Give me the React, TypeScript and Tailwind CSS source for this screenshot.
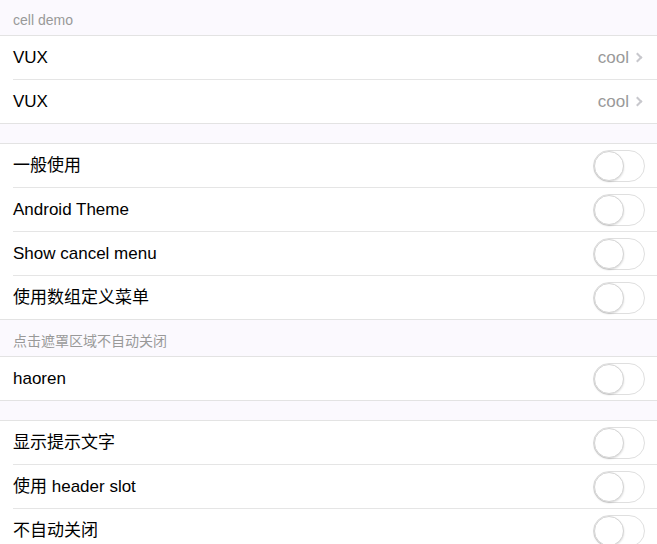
import React from "react";

const font = { fontFamily: '"Liberation Sans", Arial, "Noto Sans CJK SC", sans-serif' };

function Title({ children, tall }: { children: React.ReactNode; tall?: boolean }) {
  return (
    <div
      className={
        (tall ? "h-[36px] pt-[11px] " : "h-[35px] pt-[10px] ") +
        "px-[13px] text-[14px] leading-[20px] text-[#999999]"
      }
    >
      {children}
    </div>
  );
}

function Switch() {
  return (
    <div className="relative w-[52px] h-[32px] -mr-[1px] rounded-full border border-[#dfdfdf] bg-white">
      <div className="absolute left-0 top-0 w-[30px] h-[30px] rounded-full bg-white border border-[#d4d4d4] shadow-[0_1px_2px_rgba(0,0,0,0.15)]" />
    </div>
  );
}

function Row({ label, first, right }: { label: string; first?: boolean; right: React.ReactNode }) {
  return (
    <div className="pl-[13px]">
      <div
        className={
          "flex items-center justify-between pr-[13px] " +
          (first ? "h-[43px]" : "h-[44px] border-t border-[#e5e5e5]")
        }
      >
        <span className="text-[17px] text-black">{label}</span>
        {right}
      </div>
    </div>
  );
}

function Group({ children }: { children: React.ReactNode }) {
  return <div className="bg-white border-y border-[#e3e3e3]">{children}</div>;
}

function Link() {
  return (
    <div className="flex items-center">
      <span className="text-[17px] text-[#999999]">cool</span>
      <span className="ml-[5px] mr-[3px] w-[7px] h-[7px] border-t-2 border-r-2 border-[#c8c8cd] rotate-45" />
    </div>
  );
}

export default function App() {
  return (
    <div className="w-[657px] h-[544px] overflow-hidden bg-[#fbf9fe]" style={font}>
      <Title>cell demo</Title>
      <Group>
        <Row label="VUX" first right={<Link />} />
        <Row label="VUX" right={<Link />} />
      </Group>
      <div className="h-[19px]" />
      <Group>
        <Row label="一般使用" first right={<Switch />} />
        <Row label="Android Theme" right={<Switch />} />
        <Row label="Show cancel menu" right={<Switch />} />
        <Row label="使用数组定义菜单" right={<Switch />} />
      </Group>
      <Title tall>点击遮罩区域不自动关闭</Title>
      <Group>
        <Row label="haoren" first right={<Switch />} />
      </Group>
      <div className="h-[19px]" />
      <Group>
        <Row label="显示提示文字" first right={<Switch />} />
        <Row label="使用 header slot" right={<Switch />} />
        <Row label="不自动关闭" right={<Switch />} />
      </Group>
    </div>
  );
}
